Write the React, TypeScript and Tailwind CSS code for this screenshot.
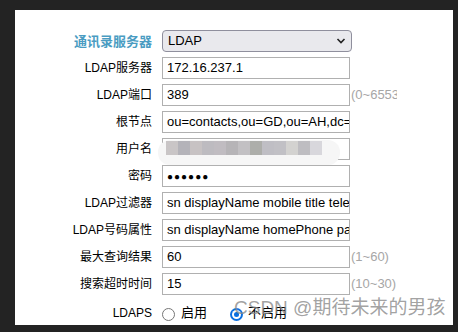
import React from "react"

const font = { fontFamily: '"Liberation Sans", "Noto Sans CJK SC", sans-serif' }

type Row = {
  label: string
  value?: string
  hint?: string
  password?: boolean
  blurred?: boolean
}

const rows: Row[] = [
  { label: "LDAP服务器", value: "172.16.237.1" },
  { label: "LDAP端口", value: "389", hint: "(0~65535)" },
  { label: "根节点", value: "ou=contacts,ou=GD,ou=AH,dc=pbx,dc=com" },
  { label: "用户名", blurred: true },
  { label: "密码", value: "●●●●●●", password: true },
  { label: "LDAP过滤器", value: "sn displayName mobile title telephoneNumber" },
  { label: "LDAP号码属性", value: "sn displayName homePhone pager mobile" },
  { label: "最大查询结果", value: "60", hint: "(1~60)" },
  { label: "搜索超时时间", value: "15", hint: "(10~30)" },
]

const mosaic = ["#c9c5c6", "#b4b3b9", "#c7c2c3", "#bdbbc0", "#c0bcc1", "#b6b4b7", "#c2c0c3", "#adaeaa", "#bfbec4", "#c1c0c5", "#d3d2d0", "#bebdc1", "#d8d7dc"]

function Label({ children }: { children: React.ReactNode }) {
  return <div className="w-[137px] shrink-0 text-right text-[12px] text-black leading-none">{children}</div>
}

export default function App() {
  return (
    <div className="h-[332px] w-[458px] bg-[#232323] pt-[10px] pl-[15px] overflow-hidden" style={font}>
      <div className="relative h-[315px] w-[438px] bg-white pt-[20px] flex flex-col gap-[5px]">
        {/* server type */}
        <div className="flex items-center gap-[10px] h-[22px]">
          <div className="w-[137px] shrink-0 text-right text-[13px] font-bold text-[#4a9cc2] leading-none">通讯录服务器</div>
          <div className="w-[190px] h-[22px] rounded-[4px] border border-[#8f8f9d] bg-[#e9e9ed] flex items-center justify-between pl-[5px] pr-[5px]">
            <span className="text-[13px] text-black">LDAP</span>
            <svg width="10" height="6" viewBox="0 0 10 6">
              <path d="M1.5 1 L5 4.5 L8.5 1" fill="none" stroke="#222" strokeWidth="1.6" />
            </svg>
          </div>
        </div>

        {rows.map((r) => (
          <div key={r.label} className="flex items-center gap-[10px] h-[22px]">
            <Label>{r.label}</Label>
            <div className="relative w-[188px] h-[22px] shrink-0 border border-[#b0b0b0] bg-white flex items-center pl-[4px] overflow-hidden">
              {r.blurred ? null : (
                <span className={`whitespace-nowrap text-black ${r.password ? "text-[10px] tracking-[1px]" : "text-[13px]"}`}>{r.value}</span>
              )}
            </div>
            {r.hint && (
              <span className="-ml-[9px] max-w-[46px] overflow-hidden text-[13px] text-[#a6a6a6] whitespace-nowrap">{r.hint}</span>
            )}
          </div>
        ))}

        {/* blurred username */}
        <div className="absolute left-[143px] top-[130px] w-[182px] h-[25px] rounded-[12px] bg-[#f6f6f6] flex items-start pl-[8px] pt-[1px]">
          {mosaic.map((c, i) => (
            <div key={i} className="w-[12px] h-[14px]" style={{ backgroundColor: c }} />
          ))}
        </div>

        {/* LDAPS */}
        <div className="flex items-center gap-[10px] h-[22px] mt-[2px]">
          <Label>LDAPS</Label>
          <div className="flex items-center text-[13px] text-black">
            <span className="w-[13px] h-[13px] rounded-full border border-[#767676] bg-white mt-[3px]" />
            <span className="ml-[6px]">启用</span>
            <span className="ml-[23px] w-[13px] h-[13px] rounded-full bg-[#0b6fe0] flex items-center justify-center mt-[3px]">
              <span className="w-[9px] h-[9px] rounded-full bg-white flex items-center justify-center">
                <span className="w-[5px] h-[5px] rounded-full bg-[#0b6fe0]" />
              </span>
            </span>
            <span className="ml-[5px]">不启用</span>
          </div>
        </div>

        {/* watermark */}
        <div className="absolute left-[219px] top-[288px] text-[19px] text-[#8a8a8a]/80 whitespace-nowrap leading-none">
          CSDN @期待未来的男孩
        </div>
      </div>
    </div>
  )
}
